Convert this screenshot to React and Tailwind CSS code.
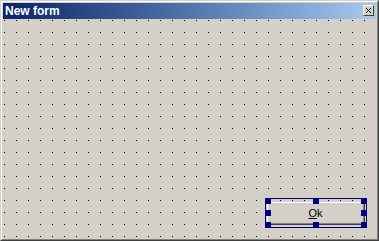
import React from 'react';

const handles = [
    'left-0 top-0',
    'left-[48px] top-0',
    'left-[96px] top-0',
    'left-0 top-[12px]',
    'left-[96px] top-[12px]',
    'left-0 top-[24px]',
    'left-[48px] top-[24px]',
    'left-[96px] top-[24px]',
];

const App = () => {
    return (
        <div className="w-[379px] h-[241px] bg-[#d4d0c8] border border-t-[#d4d0c8] border-l-[#d4d0c8] border-r-[#404040] border-b-[#404040] font-['Liberation_Sans',Arial,sans-serif]">
            <div className="w-full h-full border border-t-white border-l-white border-r-[#808080] border-b-[#808080] p-px flex flex-col">
                {/* caption */}
                <div className="h-[16px] shrink-0 flex items-start justify-between bg-gradient-to-r from-[#0a246a] to-[#a6caf0]">
                    <span className="pl-[2px] text-[12px] leading-[16px] font-bold text-white">New form</span>
                    <div className="mt-[2px] mr-[2px] w-[11px] h-[11px] bg-[#d4d0c8] border border-t-white border-l-white border-r-[#404040] border-b-[#404040] flex items-center justify-center">
                        <svg width="5" height="5" viewBox="0 0 5 5" shapeRendering="crispEdges">
                            <path d="M0 0h1v1H0zM1 1h1v1H1zM2 2h1v1H2zM3 3h1v1H3zM4 4h1v1H4zM4 0h1v1H4zM3 1h1v1H3zM1 3h1v1H1zM0 4h1v1H0z" fill="#000" />
                        </svg>
                    </div>
                </div>

                {/* design surface */}
                <div className="relative flex-1">
                    <svg className="absolute inset-0" width="100%" height="100%" shapeRendering="crispEdges">
                        <defs>
                            <pattern id="grid" width="12" height="12" patternUnits="userSpaceOnUse">
                                <rect x="1" y="1" width="1" height="1" fill="#000" />
                            </pattern>
                        </defs>
                        <rect width="100%" height="100%" fill="url(#grid)" />
                    </svg>

                    <div className="absolute left-[262px] top-[179px] w-[102px] h-[30px] border border-[#000080]">
                        <button className="absolute left-px top-[3px] w-[98px] h-[23px] bg-[#d4d0c8] border border-t-white border-l-white border-r-[#404040] border-b-[#404040] text-[11px] leading-none text-black">
                            <span className="flex w-full h-full items-center justify-center border-b border-r border-[#808080]">
                                <span><span className="underline">O</span>k</span>
                            </span>
                        </button>
                        {handles.map((pos) => (
                            <div key={pos} className={`absolute -ml-px -mt-px w-[6px] h-[6px] bg-[#000080] ${pos}`} />
                        ))}
                    </div>
                </div>
            </div>
        </div>
    );
};

export default App;
